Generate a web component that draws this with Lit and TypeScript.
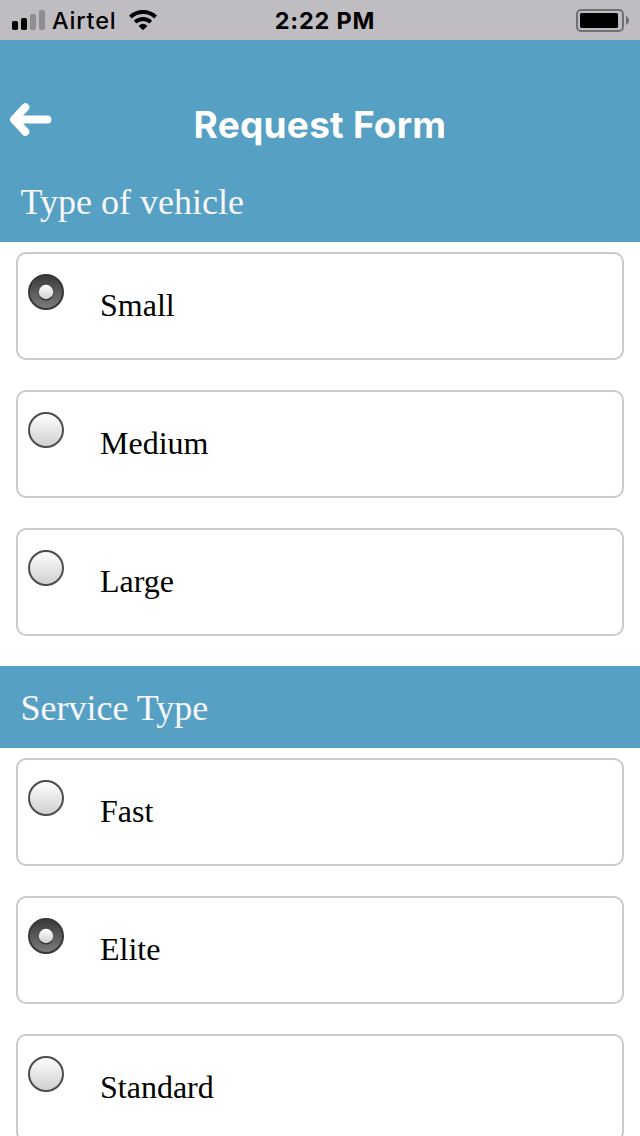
import { LitElement, html, css } from "lit";
import { customElement, property, state } from "lit/decorators.js";

@customElement("status-bar")
class StatusBar extends LitElement {
  static styles = css`
    :host {
      display: grid;
      grid-template-columns: 1fr auto 1fr;
      height: 40px;
      background: #bfbdc2;
      color: #000;
      font: 500 23.5px/42px Inter, sans-serif;
    }
    .left { display: flex; padding-left: 12px; }
    .signal { width: 33px; height: 40px; }
    .carrier { margin-left: 7px; width: 77px; font-weight: 550; letter-spacing: 0.8px; white-space: nowrap; }
    .wifi { width: 28px; height: 40px; }
    .time { font-weight: 750; letter-spacing: 0.8px; padding-left: 10px; white-space: nowrap; }
    .right { display: flex; justify-content: flex-end; padding-right: 10px; }
    .battery { width: 54px; height: 40px; }
  `;
  render() {
    return html`
      <div class="left">
        <svg class="signal" viewBox="0 0 33 40">
          <rect x="0" y="21" width="6" height="9" rx="1.8" />
          <rect x="9" y="18" width="6" height="12" rx="1.8" />
          <rect x="18" y="14" width="6" height="16" rx="1.8" fill="#8f8e92" />
          <rect x="27" y="10" width="6" height="20" rx="1.8" fill="#8f8e92" />
        </svg>
        <span class="carrier">Airtel</span>
        <svg class="wifi" viewBox="0 0 28 40" fill="none" stroke="#000">
          <path d="M1.4 17a18.4 18.4 0 0 1 25.2 0" stroke-width="4" />
          <path d="M6.2 22.1a11.4 11.4 0 0 1 15.6 0" stroke-width="3.8" />
          <path d="M14 29.2l-3.5-3.2a5.4 5.4 0 0 1 7 0z" fill="#000" stroke-width="1.4" stroke-linejoin="round" />
        </svg>
      </div>
      <span class="time">2:22 PM</span>
      <div class="right">
        <svg class="battery" viewBox="0 0 54 40">
          <rect x="1" y="10" width="46" height="21" rx="4" fill="none" stroke="#707074" stroke-width="2" />
          <rect x="4" y="13" width="38" height="15" rx="1.5" />
          <path d="M50 16q3 1.5 3 4.5t-3 4.5z" fill="#707074" />
        </svg>
      </div>
    `;
  }
}

@customElement("option-card")
class OptionCard extends LitElement {
  @property() label = "";
  @property({ type: Boolean }) checked = false;

  static styles = css`
    :host {
      display: flex;
      box-sizing: border-box;
      height: 108px;
      padding: 20px 10px;
      gap: 36px;
      border: 2px solid #cbcbcb;
      border-radius: 10px;
      background: #fff;
      cursor: pointer;
    }
    .radio { width: 36px; height: 36px; flex: none; }
    .label { font: 32px/62px "Liberation Serif", "Times New Roman", serif; color: #000; }
  `;
  render() {
    return html`
      <svg class="radio" viewBox="0 0 36 36">
        <defs>
          <linearGradient id="light" x2="0" y2="1">
            <stop stop-color="#fff" /><stop offset="1" stop-color="#cecece" />
          </linearGradient>
          <linearGradient id="dark" x2="0" y2="1">
            <stop stop-color="#393939" /><stop offset="1" stop-color="#7c7c7c" />
          </linearGradient>
          <linearGradient id="dot" x2="0" y2="1">
            <stop stop-color="#fff" /><stop offset="1" stop-color="#d0d0d0" />
          </linearGradient>
        </defs>
        ${this.checked
          ? html`<svg>
              <circle cx="18" cy="18" r="17" fill="url(#dark)" stroke="#373737" stroke-width="2" />
              <circle cx="18" cy="19.4" r="7.2" fill="#2c2c2c" />
              <circle cx="18" cy="18" r="7.2" fill="url(#dot)" />
            </svg>`
          : html`<svg>
              <circle cx="18" cy="18" r="17" fill="url(#light)" stroke="#4c4c4c" stroke-width="2" />
            </svg>`}
      </svg>
      <span class="label">${this.label}</span>
    `;
  }
}

@customElement("app-root")
class AppRoot extends LitElement {
  @state() private vehicle = "Small";
  @state() private service = "Elite";

  static styles = css`
    :host { display: block; height: 1136px; overflow: hidden; background: #fff; }
    .bar {
      display: grid;
      grid-template-columns: 52px 1fr 52px;
      box-sizing: border-box;
      height: 124px;
      padding-top: 45px;
      background: #56a0c4;
    }
    .back { width: 52px; height: 70px; }
    .title {
      margin: 0;
      text-align: center;
      color: #fff;
      font: 700 37px/79px Inter, sans-serif;
      letter-spacing: 0.25px;
      white-space: nowrap;
    }
    .section {
      margin: 0;
      box-sizing: border-box;
      height: 82px;
      padding-left: 20.5px;
      background: #56a0c4;
      color: #f8f8fc;
      font: 36px/84px "Liberation Serif", "Times New Roman", serif;
    }
    .first { height: 78px; line-height: 76px; }
    .list { display: flex; flex-direction: column; gap: 30px; padding: 10px 16px 30px; }
  `;
  render() {
    return html`
      <status-bar></status-bar>
      <header class="bar">
        <svg class="back" viewBox="0 0 52 70" fill="none" stroke="#fff" stroke-linecap="round" stroke-linejoin="round">
          <path d="M15 34.5h32.5" stroke-width="7.8" />
          <path d="M25.3 22.3L14 34.5L25.3 46.7" stroke-width="8" />
        </svg>
        <h1 class="title">Request Form</h1>
      </header>
      <h2 class="section first">Type of vehicle</h2>
      <div class="list">
        ${["Small", "Medium", "Large"].map(
          (v) => html`<option-card .label=${v} .checked=${v === this.vehicle} @click=${() => (this.vehicle = v)}></option-card>`
        )}
      </div>
      <h2 class="section">Service Type</h2>
      <div class="list">
        ${["Fast", "Elite", "Standard"].map(
          (s) => html`<option-card .label=${s} .checked=${s === this.service} @click=${() => (this.service = s)}></option-card>`
        )}
      </div>
    `;
  }
}
